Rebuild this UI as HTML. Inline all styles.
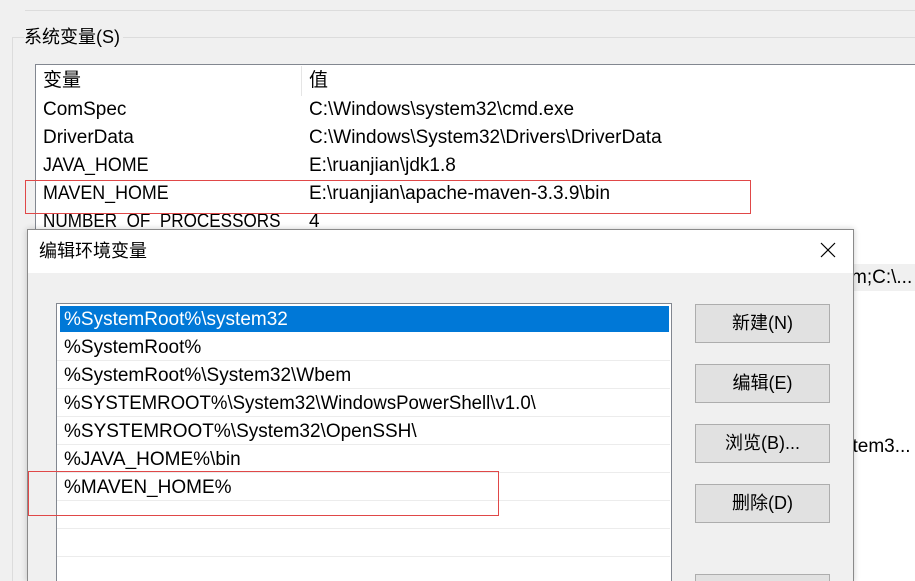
<!DOCTYPE html><html><head><meta charset="utf-8"><style>
html,body{margin:0;width:915px;height:581px;overflow:hidden}
body{background:#f0f0f0;position:relative;font-family:"Liberation Sans","Noto Sans CJK SC",sans-serif;font-size:19px;color:#000}
.a{position:absolute;white-space:nowrap}
.t{line-height:22px}
</style></head><body>
<div class="a" style="left:25px;top:0;width:890px;height:10px;border-bottom:1px solid #dcdcdc"></div>
<div class="a" style="left:12px;top:37px;width:903px;height:0;border-top:1px solid #dcdcdc"></div>
<div class="a" style="left:12px;top:37px;height:544px;border-left:1px solid #dcdcdc"></div>
<div class="a t" style="left:24px;top:26px;background:#f0f0f0;padding-right:3px;font-size:18px">系统变量(S)</div>
<div class="a" style="left:35px;top:64px;width:880px;height:517px;background:#fff;border-top:1px solid #828790;border-left:1px solid #828790"></div>
<div class="a" style="left:301px;top:66px;height:30px;border-left:1px solid #e5e5e5"></div>
<div class="a t" style="left:43px;top:70px">变量</div><div class="a t" style="left:309px;top:70px">值</div>
<div class="a t" style="left:43px;top:99px">ComSpec</div><div class="a t" style="left:309px;top:99px">C:\Windows\system32\cmd.exe</div>
<div class="a t" style="left:43px;top:127px">DriverData</div><div class="a t" style="left:309px;top:127px">C:\Windows\System32\Drivers\DriverData</div>
<div class="a t" style="left:43px;top:155px;transform:scaleX(.94);transform-origin:0 0">JAVA_HOME</div><div class="a t" style="left:309px;top:155px">E:\ruanjian\jdk1.8</div>
<div class="a t" style="left:43px;top:183px;transform:scaleX(.94);transform-origin:0 0">MAVEN_HOME</div><div class="a t" style="left:309px;top:183px">E:\ruanjian\apache-maven-3.3.9\bin</div>
<div class="a t" style="left:43px;top:211px;transform:scaleX(.9);transform-origin:0 0">NUMBER_OF_PROCESSORS</div><div class="a t" style="left:309px;top:211px">4</div>
<div class="a" style="left:25px;top:180px;width:724px;height:32px;border:1px solid #e04848"></div>
<div class="a" style="left:853px;top:264px;width:62px;height:27px;background:#f0f0f0"></div>
<div class="a t" style="left:851px;top:267px">m;C:\...</div>
<div class="a t" style="left:853px;top:436px;width:62px;overflow:hidden"><span style="margin-left:-10px">stem3...</span></div>
<div class="a" style="left:27px;top:229px;width:825px;height:352px;background:#f0f0f0;border:1px solid #8a8a8a;border-bottom:none;box-shadow:0 0 6px rgba(0,0,0,.2)"></div>
<div class="a" style="left:28px;top:230px;width:825px;height:43px;background:#fff"></div>
<div class="a t" style="left:39px;top:240px;font-size:18px">编辑环境变量</div>
<svg class="a" style="left:820px;top:242px" width="16" height="16"><path d="M1 1L15 15M15 1L1 15" stroke="#000" stroke-width="1.2"/></svg>
<div class="a" style="left:56px;top:303px;width:614px;height:278px;background:#fff;border:1px solid #828790;border-bottom:none"></div>
<div class="a" style="left:60px;top:306px;width:609px;height:26px;background:#0078d7"></div>
<div class="a" style="left:57px;top:360px;width:613px;border-top:1px solid #ececec"></div>
<div class="a" style="left:57px;top:388px;width:613px;border-top:1px solid #ececec"></div>
<div class="a" style="left:57px;top:416px;width:613px;border-top:1px solid #ececec"></div>
<div class="a" style="left:57px;top:444px;width:613px;border-top:1px solid #ececec"></div>
<div class="a" style="left:57px;top:472px;width:613px;border-top:1px solid #ececec"></div>
<div class="a" style="left:57px;top:500px;width:613px;border-top:1px solid #ececec"></div>
<div class="a" style="left:57px;top:528px;width:613px;border-top:1px solid #ececec"></div>
<div class="a" style="left:57px;top:556px;width:613px;border-top:1px solid #ececec"></div>
<div class="a t" style="left:64px;top:309px;color:#fff">%SystemRoot%\system32</div>
<div class="a t" style="left:64px;top:337px">%SystemRoot%</div>
<div class="a t" style="left:64px;top:365px">%SystemRoot%\System32\Wbem</div>
<div class="a t" style="left:64px;top:393px;transform:scaleX(.98);transform-origin:0 0">%SYSTEMROOT%\System32\WindowsPowerShell\v1.0\</div>
<div class="a t" style="left:64px;top:421px">%SYSTEMROOT%\System32\OpenSSH\</div>
<div class="a t" style="left:64px;top:449px">%JAVA_HOME%\bin</div>
<div class="a t" style="left:64px;top:477px">%MAVEN_HOME%</div>
<div class="a" style="left:28px;top:471px;width:469px;height:43px;border:1px solid #e04848"></div>
<div class="a t" style="left:695px;top:304px;width:133px;height:37px;line-height:37px;text-align:center;background:#e1e1e1;border:1px solid #adadad;font-size:18px">新建(N)</div>
<div class="a t" style="left:695px;top:364px;width:133px;height:37px;line-height:37px;text-align:center;background:#e1e1e1;border:1px solid #adadad;font-size:18px">编辑(E)</div>
<div class="a t" style="left:695px;top:424px;width:133px;height:37px;line-height:37px;text-align:center;background:#e1e1e1;border:1px solid #adadad;font-size:18px">浏览(B)...</div>
<div class="a t" style="left:695px;top:484px;width:133px;height:37px;line-height:37px;text-align:center;background:#e1e1e1;border:1px solid #adadad;font-size:18px">删除(D)</div>
<div class="a" style="left:695px;top:574px;width:133px;height:7px;background:#e1e1e1;border:1px solid #adadad;border-bottom:none"></div>
</body></html>
